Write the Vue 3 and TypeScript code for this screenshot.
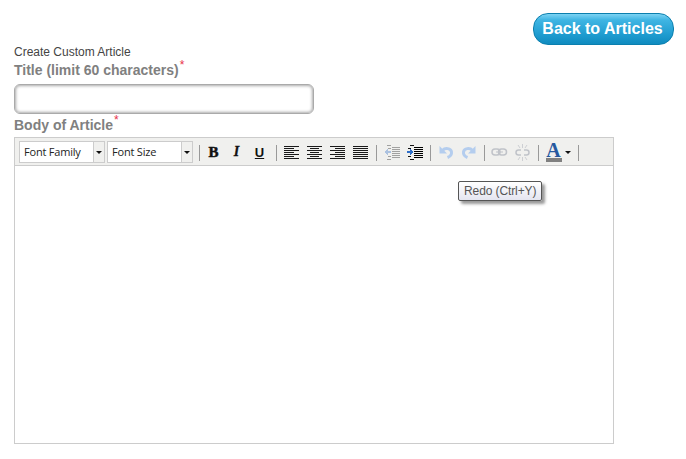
<script setup lang="ts">
const aligns = [
  [15, 10, 15, 10, 15, 10, 15],
  [15, 9, 15, 9, 15, 9, 15],
  [15, 10, 15, 10, 15, 10, 15],
  [15, 15, 15, 15, 15, 15, 15],
]

function alignX(kind: number, w: number): number {
  if (kind === 1) return 1 + Math.floor((15 - w) / 2)
  if (kind === 2) return 16 - w
  return 1
}

// rows shared by the indent and outdent icons
const indentRows = [2, 4, 6, 8, 10, 12]
</script>

<template>
  <div class="page">
    <div class="top">
      <a class="back" href="#">Back to Articles</a>
    </div>
    <div class="intro">Create Custom Article</div>
    <label class="lbl lbl-title">Title (limit 60 characters)<sup>*</sup></label>
    <input class="title-input" type="text" />
    <label class="lbl lbl-body">Body of Article<sup>*</sup></label>

    <div class="editor">
      <div class="toolbar">
        <div class="sel"><span class="sel-text">Font Family</span><span class="sel-btn"><i class="caret"></i></span></div>
        <div class="sel"><span class="sel-text">Font Size</span><span class="sel-btn"><i class="caret"></i></span></div>
        <span class="sep first"></span>

        <span class="tb"><b class="fmt b">B</b></span>
        <span class="tb"><b class="fmt i">I</b></span>
        <span class="tb"><b class="fmt u">U</b></span>
        <span class="sep second"></span>

        <span v-for="(rows, k) in aligns" :key="k" class="tb">
          <svg width="17" height="13" viewBox="0 0 17 13" shape-rendering="crispEdges">
            <rect v-for="(w, r) in rows" :key="r" :x="alignX(k, w)" :y="r * 2" :width="w" height="1" fill="#1a1a1a" />
          </svg>
        </span>
        <span class="sep"></span>

        <span class="tb">
          <svg class="off" width="16" height="15" viewBox="0 0 16 15" shape-rendering="crispEdges">
            <rect v-for="y in indentRows" :key="y" x="8" :y="y" width="8" height="1" fill="#111" />
            <path d="M3 0h4v1H3zM3 14h4v1H3zM4 3h3v1H4zM4 11h3v1H4z" fill="#111" />
            <path d="M0 7l4-3v2h3v2H4v2z" fill="#2f6fc8" />
          </svg>
        </span>
        <span class="tb">
          <svg width="16" height="15" viewBox="0 0 16 15" shape-rendering="crispEdges">
            <rect v-for="y in indentRows" :key="y" x="7" :y="y" width="9" height="1" fill="#000" />
            <path d="M3 0h4v1H3zM3 14h4v1H3zM1 3h3v1H1zM1 11h3v1H1z" fill="#111" />
            <path d="M7 7L3 4v2H0v2h3v2z" fill="#2f6fc8" />
          </svg>
        </span>
        <span class="sep"></span>

        <span class="tb">
          <svg width="16" height="14" viewBox="0 0 16 14">
            <path d="M4.500 5.500C7 2.500 13 3 13.500 7c.3 2.500-1.500 4.500-4 5.500" fill="none" stroke="#b4cdee" stroke-width="3" />
            <path d="M1.500 1v7.500H9z" fill="#b4cdee" />
          </svg>
        </span>
        <span class="tb">
          <svg width="16" height="14" viewBox="0 0 16 14">
            <path d="M11.500 5.500C9 2.500 3 3 2.500 7c-.3 2.500 1.500 4.500 4 5.500" fill="none" stroke="#b4cdee" stroke-width="3" />
            <path d="M14.500 1v7.500H7z" fill="#b4cdee" />
          </svg>
        </span>
        <span class="sep"></span>

        <span class="tb">
          <svg width="17" height="10" viewBox="0 0 17 10">
            <rect x="1" y="2" width="8" height="6" rx="3" fill="none" stroke="#c0c3c9" stroke-width="1.500" />
            <rect x="7.500" y="2" width="8" height="6" rx="3" fill="none" stroke="#c0c3c9" stroke-width="1.500" />
            <path d="M5 5h7" stroke="#c0c3c9" />
          </svg>
        </span>
        <span class="tb">
          <svg width="17" height="18" viewBox="0 0 17 18">
            <path d="M7 7H4.500a2.500 2.500 0 0 0 0 5H7M10 7h2.500a2.500 2.500 0 0 1 0 5H10" fill="none" stroke="#c0c3c9" stroke-width="1.500" />
            <path d="M8.500 1v4M8.500 14v4M4 2l2 3M13 2l-2 3M4 17l2-3M13 17l-2-3" stroke="#cdcfd3" />
          </svg>
        </span>
        <span class="sep"></span>

        <span class="tb color">
          <span class="color-a">A</span>
          <span class="color-bar"></span>
        </span>
        <i class="caret color-caret"></i>
        <span class="sep last"></span>
      </div>
      <div class="content">
        <div class="tip">Redo (Ctrl+Y)</div>
      </div>
    </div>
  </div>
</template>

<style>
html, body {
  background: #fff;
}
</style>

<style scoped>
.page {
  padding: 13px 12px 0 14px;
  font-family: "Liberation Sans", Arial, sans-serif;
}

.top {
  display: flex;
  justify-content: flex-end;
}

.back {
  display: block;
  width: 141px;
  height: 32px;
  box-sizing: border-box;
  padding-right: 2px;
  line-height: 29px;
  text-align: center;
  color: #fff;
  font-size: 16px;
  font-weight: bold;
  text-decoration: none;
  border: 1px solid #0b7fae;
  border-radius: 15px;
  background: linear-gradient(#7dd3f3, #3fb5e3 20%, #1e9bcf 70%, #0f8bbf);
}

.intro {
  font-size: 12px;
  line-height: 14px;
  color: #444;
}

.lbl {
  display: block;
  font-size: 14px;
  font-weight: bold;
  color: #808080;
  line-height: 16px;
}

.lbl sup {
  color: #e8304a;
  font-size: 12px;
  font-weight: normal;
  line-height: 0;
  margin-left: 1px;
}

.lbl-title {
  margin-top: 3px;
}

.lbl-body {
  margin-top: 3px;
}

.title-input {
  display: block;
  box-sizing: border-box;
  width: 300px;
  height: 30px;
  margin: 6px 0 0;
  padding: 0;
  border: 1px solid #aaa;
  border-radius: 6px;
  background: #fff;
  box-shadow: inset 0 0 3px 1px #aaa;
  outline: none;
}

.editor {
  width: 600px;
  height: 307px;
  box-sizing: border-box;
  margin-top: 4px;
  border: 1px solid #ccc;
  display: flex;
  flex-direction: column;
}

.toolbar {
  height: 28px;
  box-sizing: border-box;
  display: flex;
  align-items: center;
  padding: 1px 0 0 4px;
  background: #f0f0ee;
  border-bottom: 1px solid #ccc;
}

.sel {
  width: 86px;
  height: 22px;
  box-sizing: border-box;
  margin-right: 2px;
  display: flex;
  border: 1px solid #ccc;
  background: #fff;
}

.sel-text {
  flex: 1;
  padding-left: 4px;
  font-size: 11px;
  line-height: 19px;
  color: #222;
  font-family: "Open Sans", "Liberation Sans", sans-serif;
  letter-spacing: -0.2px;
}

.sel-btn {
  width: 10px;
  display: flex;
  align-items: center;
  justify-content: center;
  background: #f0f0ee;
  border-left: 1px solid #ccc;
}

.caret {
  display: block;
  width: 0;
  height: 0;
  border-left: 3px solid transparent;
  border-right: 3px solid transparent;
  border-top: 3px solid #111;
}

.sep {
  width: 1px;
  height: 16px;
  margin: 2px 3px 0 4px;
  background: #999;
}

.sep.first {
  margin-left: 4px;
  margin-right: 2px;
}

.sep.second {
  margin-left: 5px;
}

.sep.last {
  margin-left: 7px;
}

.tb {
  width: 23px;
  height: 20px;
  display: flex;
  align-items: center;
  justify-content: center;
}

.off {
  opacity: 0.35;
}

.fmt {
  color: #111;
  font-family: "Liberation Serif", serif;
  font-size: 14px;
  line-height: 1;
  -webkit-text-stroke: 0.3px #111;
}

.fmt.b {
  font-size: 15px;
  -webkit-text-stroke: 0.5px #111;
}

.fmt.i {
  font-style: italic;
}

.fmt.u {
  font-size: 13px;
  text-decoration: underline;
  -webkit-text-stroke: 0;
  font-family: "Liberation Sans", sans-serif;
}

.color {
  flex-direction: column;
}

.color-a {
  font-family: "Liberation Serif", serif;
  font-weight: bold;
  font-size: 20px;
  line-height: 15px;
  color: #26589f;
}

.color-bar {
  width: 16px;
  height: 4px;
  background: #808080;
}

.content {
  flex: 1;
  position: relative;
  background: #fff;
}

.tip {
  position: absolute;
  left: 443px;
  top: 15px;
  height: 20px;
  box-sizing: border-box;
  padding: 0 5px;
  border: 1px solid #555;
  border-radius: 2px;
  font-size: 12px;
  letter-spacing: -0.1px;
  line-height: 18px;
  color: #555;
  background: linear-gradient(#fff, #e4e5f0);
  box-shadow: 3px 3px 3px #999;
  white-space: nowrap;
}
</style>
